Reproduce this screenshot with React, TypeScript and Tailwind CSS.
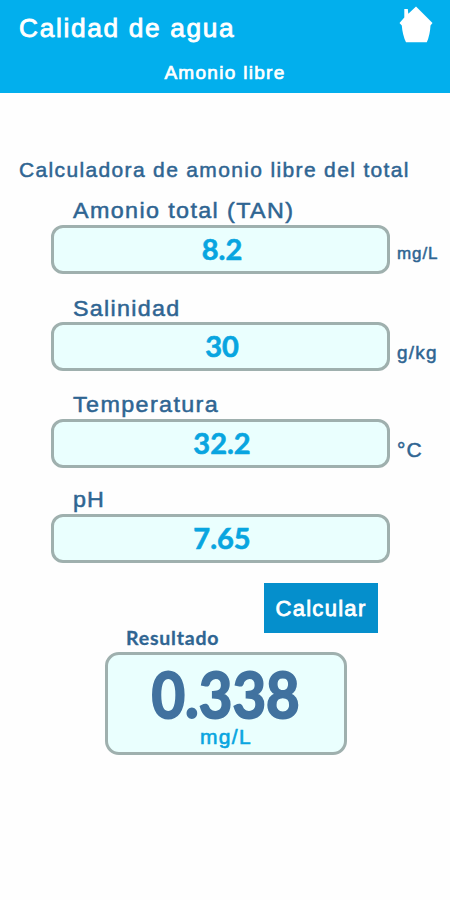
type Field = {
  label: string;
  value: string;
  unit: string;
  labelClass: string;
  unitClass: string;
};

const fields: Field[] = [
  {
    label: "Amonio total (TAN)",
    value: "8.2",
    unit: "mg/L",
    labelClass: "h-[29px] tracking-[1.3px]",
    unitClass: "pt-[18px] text-[17px] tracking-[0.9px]",
  },
  {
    label: "Salinidad",
    value: "30",
    unit: "g/kg",
    labelClass: "h-[48px] pt-[20px] tracking-[1.2px]",
    unitClass: "pt-[20px] text-[19px] tracking-[1.2px]",
  },
  {
    label: "Temperatura",
    value: "32.2",
    unit: "°C",
    labelClass: "h-[48px] pt-[19px] tracking-[1.3px]",
    unitClass: "pt-[20px] text-[21px] tracking-[1px]",
  },
  {
    label: "pH",
    value: "7.65",
    unit: "",
    labelClass: "h-[46px] pt-[17px] tracking-[1px]",
    unitClass: "",
  },
];

function HomeIcon() {
  return (
    <svg width="34" height="37" viewBox="0 0 34 37" fill="#fff">
      <path d="M17 0.5 L33.5 17 L31.5 19.5 Q31 29 27.8 36.3 H7 Q3.5 29 2.8 19.5 L0.5 17 L5.3 11.5 V3 H8.8 L9.3 7.8 Z" />
    </svg>
  );
}

function FieldRow({ field }: { field: Field }) {
  return (
    <div>
      <div
        className={`pl-[73px] text-[22px] leading-[30px] whitespace-nowrap [-webkit-text-stroke:0.5px_#2f6592] ${field.labelClass}`}
      >
        <span className="inline-block origin-left scale-x-[1.06]">{field.label}</span>
      </div>
      <div className="flex pl-[51px]">
        <div className="flex h-[49px] w-[339px] shrink-0 items-center justify-center rounded-[12px] border-[3px] border-[#9fb0ae] bg-[#eafffe] pb-[2px] pl-[3px] font-[Lato,sans-serif] text-[29px] font-bold text-[#08a5e0] [-webkit-text-stroke:0.6px_#08a5e0]">
          {field.value}
        </div>
        <div
          className={`pl-[7px] leading-[22px] whitespace-nowrap [-webkit-text-stroke:0.5px_#2f6592] ${field.unitClass}`}
        >
          {field.unit}
        </div>
      </div>
    </div>
  );
}

export default function App() {
  return (
    <div className="h-[900px] w-[450px] overflow-hidden bg-[#fefefe] font-['Liberation_Sans',Arial,sans-serif] text-[#2f6592]">
      <header className="h-[93px] bg-[#02afed] text-white">
        <div className="flex h-[58px] justify-between pr-[17px] pl-[19px]">
          <h1 className="pt-[12px] text-[25px] leading-[32px] [-webkit-text-stroke:0.8px_#fff]">
            <span className="inline-block origin-left scale-x-[1.05] tracking-[1.6px]">Calidad de agua</span>
          </h1>
          <button className="h-[43px] pt-[6px]" aria-label="Inicio">
            <HomeIcon />
          </button>
        </div>
        <p className="pt-[3px] text-center text-[19px] leading-[24px] tracking-[1.3px] [-webkit-text-stroke:0.7px_#fff]">
          Amonio libre
        </p>
      </header>

      <main className="pt-[64px]">
        <h2 className="mb-[13px] pl-[19px] text-[21px] leading-[26px] tracking-[1.35px] whitespace-nowrap [-webkit-text-stroke:0.5px_#2f6592]">
          Calculadora de amonio libre del total
        </h2>

        {fields.map((f) => (
          <FieldRow key={f.label} field={f} />
        ))}

        <div className="mt-[20px] flex h-[69px] items-start">
          <div className="w-[264px] pt-[43px] pl-[126px] font-[Lato,sans-serif] text-[19.5px] leading-[24px] font-bold tracking-[0.8px] [-webkit-text-stroke:0.3px_#2f6592]">
            Resultado
          </div>
          <button className="h-[50px] w-[114px] bg-[#058fcc] text-[22px] leading-[52px] tracking-[1.3px] whitespace-nowrap text-white [-webkit-text-stroke:0.8px_#fff]">
            Calcular
          </button>
        </div>

        <div className="ml-[105px] h-[103px] w-[242px] rounded-[14px] border-[3px] border-[#9fb0ae] bg-[#eafffe] text-center">
          <div className="flex h-[70px] items-start justify-center pt-[10px] font-[Lato,sans-serif] text-[63px] leading-[58px] font-bold text-[#41729f] [-webkit-text-stroke:2px_#41729f]">
            <span className="inline-block scale-x-[0.92]">0.338</span>
          </div>
          <div className="text-[21px] leading-[24px] tracking-[1.3px] text-[#08a5e0] [-webkit-text-stroke:0.6px_#08a5e0]">
            mg/L
          </div>
        </div>
      </main>
    </div>
  );
}
